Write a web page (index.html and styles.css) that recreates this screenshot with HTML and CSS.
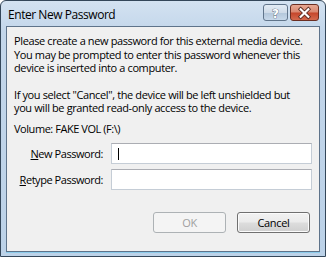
FILE: index.html
```html
<!DOCTYPE html>
<html>
<head>
<meta charset="utf-8">
<link rel="stylesheet" href="styles.css">
</head>
<body>
<div class="window">
  <div class="titlebar">
    <span class="title">Enter New Password</span>
    <div class="caption">
      <div class="cap-btn help">
        <svg width="25" height="16" viewBox="0 0 25 16"><text x="12.5" y="13" text-anchor="middle" class="q">?</text></svg>
      </div>
      <div class="cap-btn close">
        <svg width="28" height="16" viewBox="0 0 28 16">
          <path d="M10 4 L18 12 M18 4 L10 12" stroke="#5a2a20" stroke-width="4" stroke-linecap="square"/>
          <path d="M10 4 L18 12 M18 4 L10 12" stroke="#ffffff" stroke-width="2.2" stroke-linecap="square"/>
        </svg>
      </div>
    </div>
  </div>
  <div class="client">
    <p class="msg">Please create a new password for this external media device.<br>You may be prompted to enter this password whenever this<br>device is inserted into a computer.</p>
    <p class="msg">If you select "Cancel", the device will be left unshielded but<br>you will be granted read-only access to the device.</p>
    <p class="volume">Volume: FAKE VOL (F:\)</p>
    <div class="form">
      <label class="lbl"><span class="ak">N</span>ew Password:</label>
      <div class="field"><span class="caret"></span></div>
      <label class="lbl"><span class="ak">R</span>etype Password:</label>
      <div class="field"></div>
    </div>
    <div class="actions">
      <div class="btn disabled">OK</div>
      <div class="btn">Cancel</div>
    </div>
  </div>
</div>
</body>
</html>
```
FILE: styles.css
```css
* { box-sizing: border-box; }
html, body { margin: 0; padding: 0; background: #ffffff; }
body { width: 326px; height: 257px; overflow: hidden; }

.window {
  width: 326px;
  height: 257px;
  border: 1px solid #34475a;
  border-radius: 6px 6px 0 0;
  background: linear-gradient(180deg, #d3e2f1 0%, #c3d6ea 12%, #bcd2e8 100%);
  display: flex;
  flex-direction: column;
  padding: 0 5px 4px 5px;
  font-family: "Open Sans", "Noto Sans", sans-serif;
  color: #000;
  white-space: nowrap;
}

.titlebar {
  height: 25px;
  display: flex;
  align-items: flex-start;
  flex: none;
}
.title {
  font-size: 12px;
  padding: 5px 0 0 2px;
  color: #000;
  letter-spacing: -0.45px;
}
.caption {
  margin-left: auto;
  margin-top: 3px;
  display: flex;
  gap: 2px;
  margin-right: 1px;
}
.cap-btn {
  height: 17px;
  border: 1px solid #61758b;
  border-radius: 3px;
  display: flex;
  align-items: center;
  justify-content: center;
}
.cap-btn.help {
  width: 25px;
  background: linear-gradient(180deg, #e3ecf5 0%, #cfdbe8 50%, #b3c6da 52%, #c7d8ea 100%);
}
.cap-btn.close {
  width: 29px;
  border-color: #6b2e22;
  background: linear-gradient(180deg, #e8a792 0%, #d98770 48%, #c5452a 52%, #d46a4e 100%);
}
.q {
  font-family: "DejaVu Sans", sans-serif;
  font-size: 13px;
  font-weight: bold;
  fill: #ffffff;
  stroke: #4b5b6c;
  stroke-width: 0.8px;
  paint-order: stroke;
}

.client {
  flex: 1;
  background: #f0f0f0;
  border: 1px solid #5e738a;
  padding: 7px 9px 0 7px;
  display: flex;
  flex-direction: column;
  font-size: 11px;
  letter-spacing: -0.38px;
  box-shadow: 0 1px 0 #8ccbea;
}
.msg {
  margin: 0 0 13px 0;
  line-height: 13.5px;
}
.msg + .msg { margin-bottom: 7px; }
.volume {
  margin: 0;
  line-height: 14px;
  letter-spacing: -0.45px;
}
.form {
  margin-top: 7px;
  display: grid;
  grid-template-columns: 89px 201px;
  column-gap: 8px;
  row-gap: 5px;
  align-items: center;
}
.lbl {
  text-align: right;
  letter-spacing: -0.45px;
}
.ak { text-decoration: underline; }
.field {
  height: 21px;
  background: #ffffff;
  border: 1px solid #c5cdd6;
  border-top-color: #abadb3;
  padding: 4px 0 0 6px;
}
.caret {
  display: block;
  width: 1px;
  height: 12px;
  background: #000;
}
.actions {
  margin-top: 22px;
  display: flex;
  justify-content: flex-end;
  gap: 11px;
}
.btn {
  width: 73px;
  height: 21px;
  border: 1px solid #707070;
  border-radius: 3px;
  background: linear-gradient(180deg, #f2f2f2 0%, #ebebeb 48%, #dddddd 52%, #cfcfcf 100%);
  display: flex;
  align-items: center;
  justify-content: center;
  font-size: 11px;
  letter-spacing: -0.3px;
  box-shadow: inset 0 0 0 1px #fbfbfb;
}
.btn.disabled {
  border-color: #adb2b5;
  background: #f4f4f4;
  color: #a0a0a0;
  box-shadow: none;
}
```
